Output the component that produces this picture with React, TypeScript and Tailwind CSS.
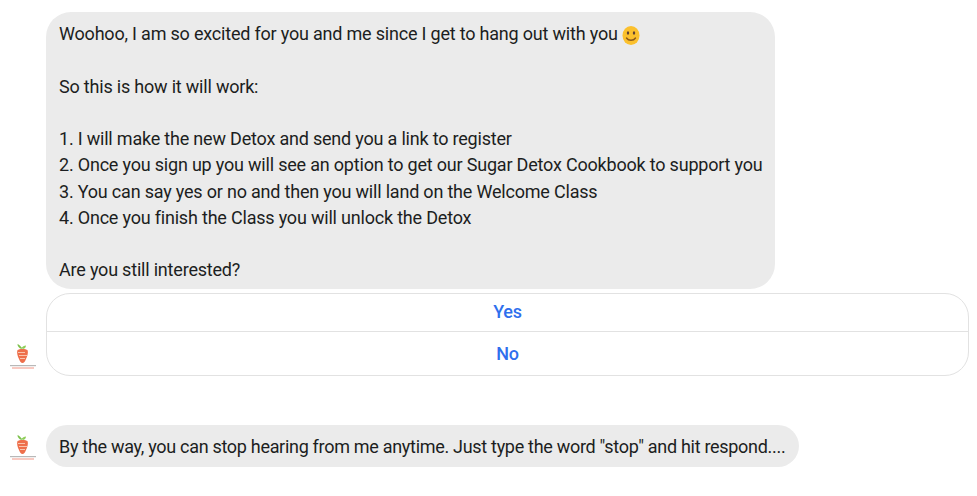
import React from 'react';

const Avatar: React.FC = () => (
  <svg viewBox="0 0 28 30" className="w-[28px] h-[30px] shrink-0 mb-[4px]">
    <path d="M13 6 C12 4.500 10.500 3 8.500 2 C8.500 4.500 10 6 12.500 7 Z" fill="#7cc04b" />
    <path d="M12.500 6 C13.500 4.500 15 3.500 17 3.500 C17 5 16 6.500 14 7 Z" fill="#8fce5a" />
    <path d="M8.500 8 C10 6.500 17 6.500 18.500 8 C19.500 10.500 18.500 14 17 17 C16 19.500 15 21 13.500 21 C12 21 11 19.500 10 17 C8.500 14 7.500 10.500 8.500 8Z" fill="#ee6f4b" />
    <path d="M9 10.500 H16 M10 13.500 H18 M11 16.500 H16" stroke="#f9c4ad" strokeWidth="1" />
    <rect x="1" y="23" width="26" height="1.200" fill="#9a9a9a" opacity="0.7" />
    <rect x="3" y="25" width="22" height="2" fill="#f08a78" opacity="0.45" />
  </svg>
);

const Smiley: React.FC = () => (
  <svg viewBox="0 0 18 20" className="inline-block w-[18px] h-[21px] align-[-6px]">
    <ellipse cx="9" cy="10" rx="8.500" ry="9.500" fill="#fbc02d" />
    <ellipse cx="6" cy="7.500" rx="1.200" ry="1.800" fill="#5d4037" />
    <ellipse cx="12" cy="7.500" rx="1.200" ry="1.800" fill="#5d4037" />
    <path d="M4.500 12.500 C6.500 15.500 11.500 15.500 13.500 12.500" stroke="#8d5a1c" strokeWidth="1.400" fill="none" strokeLinecap="round" />
  </svg>
);

const App: React.FC = () => {
  return (
    <div className="w-[977px] h-[496px] bg-white overflow-hidden pt-3 text-[#1c1e21] text-[18px] leading-[26.25px] font-['Roboto',sans-serif] tracking-[-0.2px]">
      <div className="ml-[46px] w-[729px] h-[277px] bg-[#ebebeb] rounded-[25px] px-[13px] pt-[9px] whitespace-nowrap">
        <p>Woohoo, I am so excited for you and me since I get to hang out with you <Smiley /></p>
        <p className="mt-[26.25px]">So this is how it will work:</p>
        <p className="mt-[26.25px]">1. I will make the new Detox and send you a link to register</p>
        <p>2. Once you sign up you will see an option to get our Sugar Detox Cookbook to support you</p>
        <p>3. You can say yes or no and then you will land on the Welcome Class</p>
        <p>4. Once you finish the Class you will unlock the Detox</p>
        <p className="mt-[26.25px]">Are you still interested?</p>
      </div>

      <div className="flex items-end gap-[9px] pl-[9px] mt-1">
        <Avatar />
        <div className="w-[923px] h-[83px] border border-[#e2e2e2] rounded-[24px] flex flex-col font-medium text-[#2f6fed] text-center">
          <div className="h-[38px] flex items-center justify-center border-b border-[#e2e2e2]">Yes</div>
          <div className="flex-1 flex items-center justify-center pt-[2px]">No</div>
        </div>
      </div>

      <div className="flex items-end gap-[9px] pl-[9px] mt-[49px]">
        <Avatar />
        <div className="h-[42px] w-[753px] bg-[#ebebeb] rounded-[21px] px-[13px] pt-[2px] flex items-center whitespace-nowrap tracking-[-0.3px]">
          By the way, you can stop hearing from me anytime. Just type the word "stop" and hit respond....
        </div>
      </div>
    </div>
  );
};

export default App;
